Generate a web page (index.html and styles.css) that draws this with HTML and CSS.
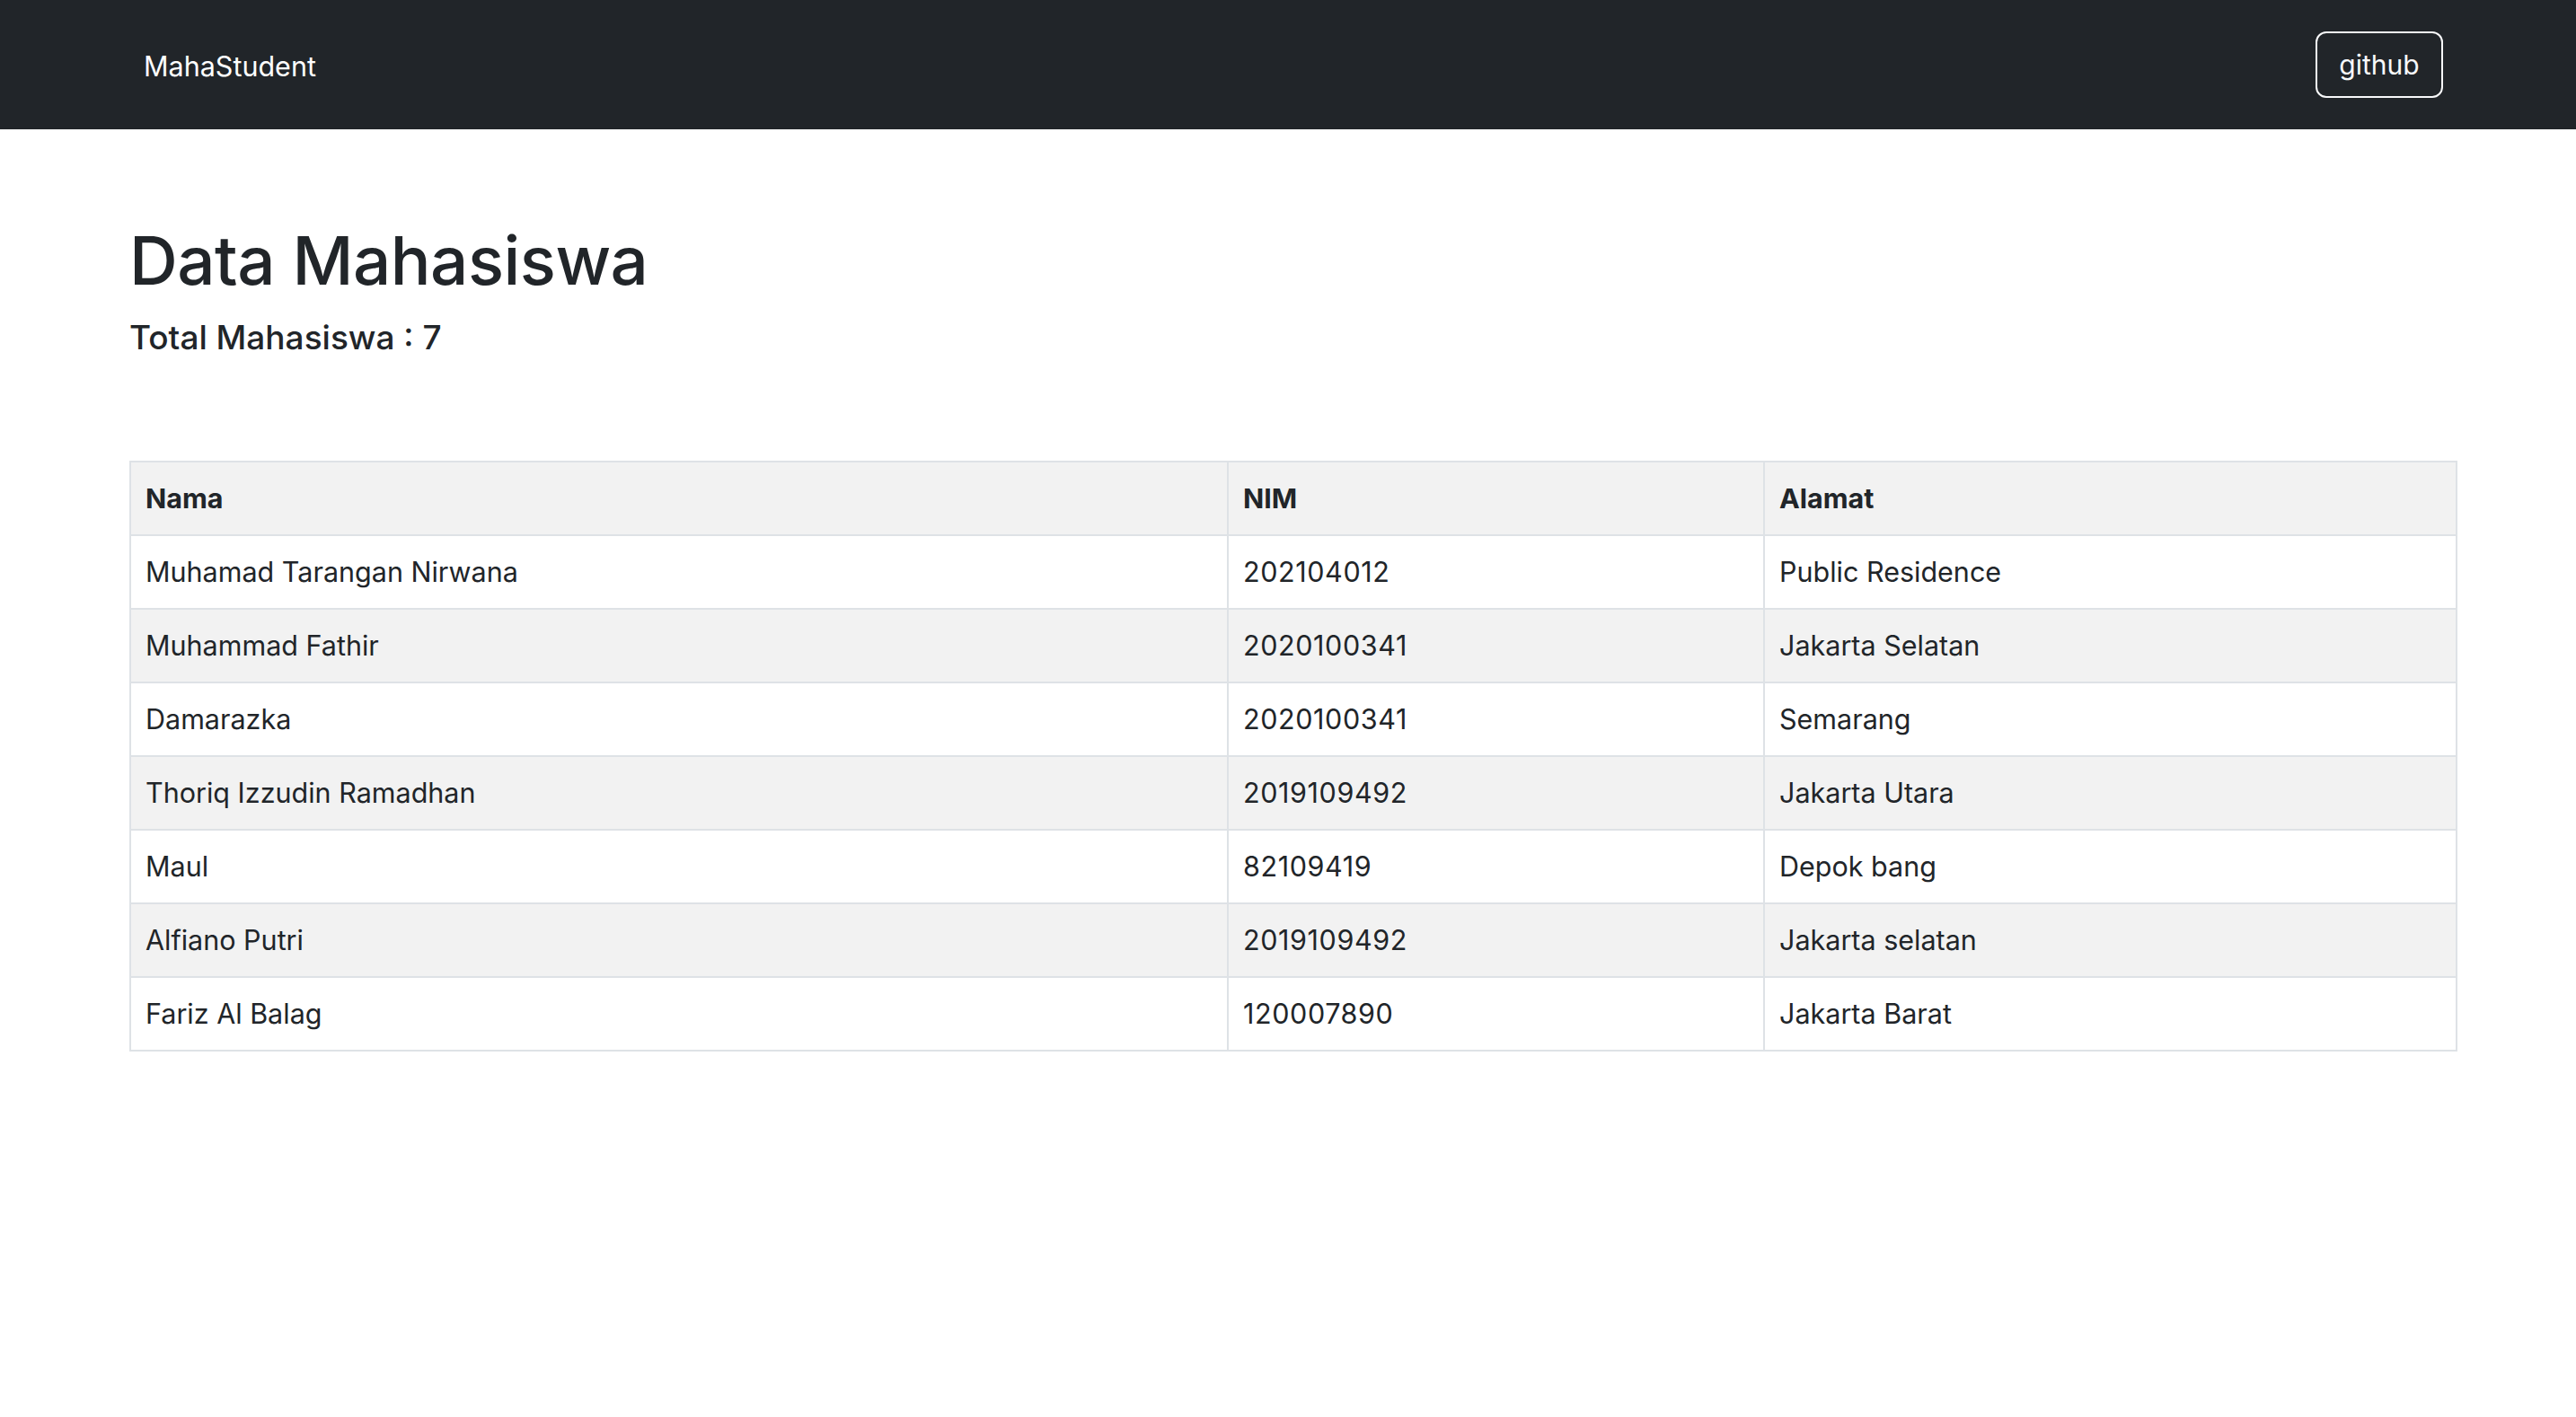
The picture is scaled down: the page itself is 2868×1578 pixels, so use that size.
FILE: index.html
```html
<!DOCTYPE html>
<html lang="id">
<head>
<meta charset="utf-8">
<title>MahaStudent</title>
<link rel="stylesheet" href="styles.css">
</head>
<body>
<nav class="navbar">
  <div class="nav-inner">
    <a class="brand" href="#">MahaStudent</a>
    <a class="btn-github" href="#">github</a>
  </div>
</nav>
<main class="container">
  <h1 class="title">Data Mahasiswa</h1>
  <h5 class="subtitle">Total Mahasiswa : 7</h5>
  <table class="data-table">
    <colgroup>
      <col class="col-nama">
      <col class="col-nim">
      <col class="col-alamat">
    </colgroup>
    <tbody>
      <tr class="head"><th>Nama</th><th>NIM</th><th>Alamat</th></tr>
      <tr><td>Muhamad Tarangan Nirwana</td><td class="num">202104012</td><td>Public Residence</td></tr>
      <tr><td>Muhammad Fathir</td><td class="num">2020100341</td><td>Jakarta Selatan</td></tr>
      <tr><td>Damarazka</td><td class="num">2020100341</td><td>Semarang</td></tr>
      <tr><td>Thoriq Izzudin Ramadhan</td><td class="num">2019109492</td><td>Jakarta Utara</td></tr>
      <tr><td>Maul</td><td class="num">82109419</td><td>Depok bang</td></tr>
      <tr><td>Alfiano Putri</td><td class="num">2019109492</td><td>Jakarta selatan</td></tr>
      <tr><td>Fariz Al Balag</td><td class="num">120007890</td><td>Jakarta Barat</td></tr>
    </tbody>
  </table>
</main>
</body>
</html>
```

FILE: styles.css
```css
* {
  box-sizing: border-box;
}

html, body {
  margin: 0;
  padding: 0;
  background: #ffffff;
}

body {
  font-family: Inter, "Noto Sans", "Liberation Sans", sans-serif;
  color: #212529;
}

.navbar {
  background: #212529;
  height: 144px;
}

.nav-inner {
  height: 100%;
  display: flex;
  align-items: center;
  justify-content: space-between;
  padding-left: 160px;
  padding-right: 148px;
}

.brand {
  color: #ffffff;
  text-decoration: none;
  font-size: 30.5px;
  line-height: 40px;
  padding-top: 3px;
}

.btn-github {
  display: flex;
  align-items: center;
  justify-content: center;
  width: 142px;
  height: 74px;
  border: 2px solid #f8f9fa;
  border-radius: 12px;
  color: #f8f9fa;
  text-decoration: none;
  font-size: 30px;
  line-height: 1;
}

.container {
  margin-left: 144px;
  width: 2590px;
  padding-top: 98px;
}

.title {
  margin: 0;
  font-size: 74.5px;
  font-weight: 500;
  line-height: 96px;
  letter-spacing: -0.5px;
}

.subtitle {
  margin: 16px 0 0 0;
  font-size: 37px;
  font-weight: 500;
  line-height: 43px;
}

.data-table {
  margin-top: 116px;
  width: 100%;
  border-collapse: collapse;
  table-layout: fixed;
  font-size: 30.5px;
}

.col-nama { width: 1222px; }
.col-nim { width: 597px; }
.col-alamat { width: 771px; }

.data-table th,
.data-table td {
  border: 2px solid #dee2e6;
  padding: 16px 16px;
  line-height: 48px;
  text-align: left;
  vertical-align: top;
}

.data-table th {
  font-weight: 700;
}

.data-table td.num {
  letter-spacing: 0.6px;
}

.data-table tr:nth-child(odd) {
  background: #f2f2f2;
}
```
